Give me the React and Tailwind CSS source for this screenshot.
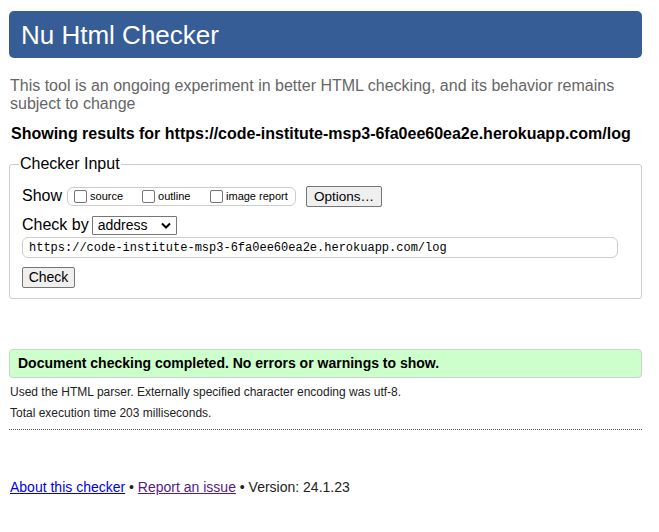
import React from "react";

function Cb({ label }) {
  return (
    <label className="flex items-center">
      <span className="inline-block w-[13px] h-[13px] border border-[#767676] rounded-[2px] bg-white mr-[3px]"></span>
      <span className="text-[11px] leading-[13px] text-black">{label}</span>
    </label>
  );
}

export default function App() {
  return (
    <div className="w-[659px] min-h-[532px] bg-white pl-[9px] pr-[17px] pt-[11px] text-black" style={{ fontFamily: '"Liberation Sans", Arial, sans-serif' }}>
      <div className="h-[47px] rounded-[5px] bg-[#365d95] text-white text-[26px] leading-[49px] pl-[12px]">Nu Html Checker</div>

      <p className="mt-[19px] text-[16px] leading-[18px] text-[#666] pl-[1px]">
        This tool is an ongoing experiment in better HTML checking, and its behavior remains subject to change
      </p>

      <p className="mt-[12px] text-[16px] leading-[18px] font-bold pl-[2px]">
        Showing results for https://code-institute-msp3-6fa0ee60ea2e.herokuapp.com/log
      </p>

      <fieldset className="mt-[12px] border border-[#ccc] rounded-[3px] pl-[12px] pr-[23px] pb-[10px]">
        <legend className="text-[16px] leading-[18px] px-[1px] ml-[-3px]">Checker Input</legend>
        <div className="mt-[12px] h-[22px] flex items-center">
          <span className="text-[16px] leading-[18px]">Show</span>
          <div className="ml-[5px] h-[19px] w-[229px] border border-[#ccc] rounded-[6px] flex items-center pl-[6px]">
            <div className="w-[68px]"><Cb label="source" /></div>
            <div className="w-[68px]"><Cb label="outline" /></div>
            <div><Cb label="image report" /></div>
          </div>
          <button className="ml-[10px] h-[21px] w-[76px] bg-[#efefef] border border-[#767676] rounded-[2px] text-[13.5px] leading-[19px]">Options…</button>
        </div>
        <div className="mt-[7px] h-[22px] flex items-center">
          <span className="text-[16px] leading-[18px]">Check by</span>
          <div className="ml-[3px] h-[19px] w-[85px] border border-[#767676] rounded-[1px] flex items-center justify-between pl-[5px] pr-[5px] bg-white">
            <span className="text-[14px] leading-[17px]">address</span>
            <svg width="10" height="7" viewBox="0 0 10 7"><path d="M1 1.5 L5 5.5 L9 1.5" fill="none" stroke="#000" strokeWidth="2" /></svg>
          </div>
        </div>
        <div className="mt-[1px] h-[21px] border border-[#ccc] rounded-[6px] flex items-center pl-[6px] text-[12px]" style={{ fontFamily: '"Liberation Mono", "DejaVu Sans Mono", monospace' }}>
          https://code-institute-msp3-6fa0ee60ea2e.herokuapp.com/log
        </div>
        <button className="mt-[9px] block h-[21px] w-[53px] bg-[#efefef] border border-[#767676] rounded-[2px] text-[14px] leading-[19px]">Check</button>
      </fieldset>

      <div className="mt-[50px] h-[29px] bg-[#ccffcc] border border-[#c8d8c8] rounded-[4px] pl-[8px] flex items-center text-[14px] font-bold">
        Document checking completed. No errors or warnings to show.
      </div>

      <p className="mt-[7px] text-[12px] leading-[14px] text-[#222] pl-[1px]">Used the HTML parser. Externally specified character encoding was utf-8.</p>
      <p className="mt-[7px] text-[12px] leading-[14px] text-[#222] pl-[1px]">Total execution time 203 milliseconds.</p>

      <div className="mt-[9px] border-t border-dotted border-[#555]"></div>

      <p className="mt-[49px] text-[14px] leading-[16px] text-[#222] pl-[1px]">
        <a className="text-[#0000ee] underline" href="#">About this checker</a> • <a className="text-[#551a8b] underline" href="#">Report an issue</a> • Version: 24.1.23
      </p>
    </div>
  );
}
